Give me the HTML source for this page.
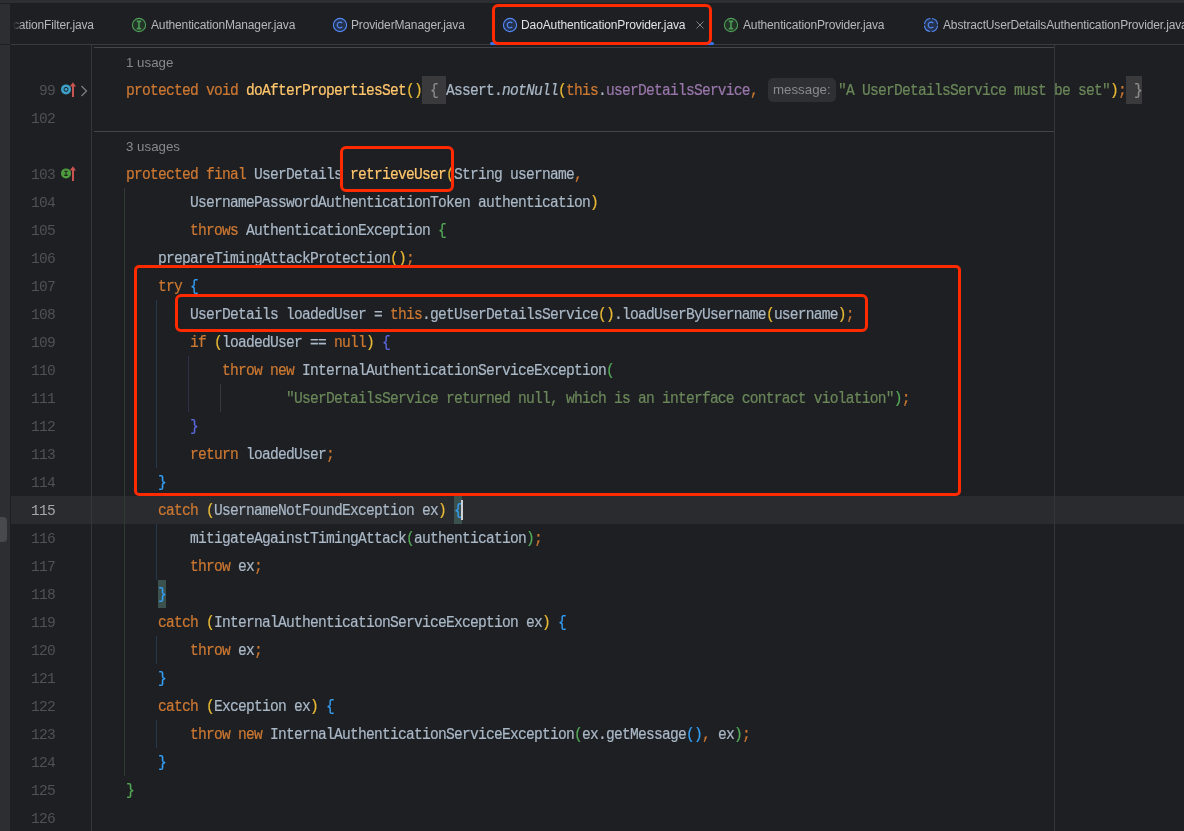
<!DOCTYPE html>
<html><head><meta charset="utf-8">
<style>
html,body{margin:0;padding:0;}
*{-webkit-font-smoothing:antialiased;}
body{width:1184px;height:831px;overflow:hidden;background:#1E1F22;position:relative;font-family:"Liberation Sans",sans-serif;}
.abs{position:absolute;}
.ln,.cl,.tab,.inl{will-change:transform;}
.ln{position:absolute;height:28px;line-height:30px;white-space:pre;font-family:"Liberation Mono",monospace;font-size:14.6px;letter-spacing:-0.76px;color:#4E5157;}
.ln.cur{color:#A4A6AC;}
.cl{position:absolute;height:28px;line-height:28px;white-space:pre;font-family:"Liberation Mono",monospace;font-size:14.6px;letter-spacing:-0.76px;color:#A9B7C6;-webkit-text-stroke:0.2px currentColor;transform:scaleY(1.1);transform-origin:0 5px;}
.tab{position:absolute;top:4px;height:40px;line-height:42px;white-space:pre;font-size:12px;letter-spacing:-0.15px;}
.inl{position:absolute;height:28px;line-height:30px;white-space:pre;font-size:13.3px;color:#86898F;}
</style></head><body>
<div class="abs" style="left:0px;top:0px;width:1184px;height:3px;background:#2D2E32"></div>
<div class="abs" style="left:0px;top:4px;width:10px;height:827px;background:#2D2E32"></div>
<div class="abs" style="left:0px;top:44px;width:10px;height:1px;background:#1E1F22"></div>
<div class="abs" style="left:-3px;top:517px;width:10px;height:25px;background:#48494C;border-radius:4px"></div>
<div class="abs" style="left:11px;top:44px;width:1173px;height:1px;background:#393B40"></div>
<div class="abs" style="left:11px;top:496px;width:1173px;height:28px;background:#2A2B2F"></div>
<div class="abs" style="left:91px;top:45px;width:1px;height:786px;background:#33363A"></div>
<div class="abs" style="left:1054px;top:45px;width:1px;height:786px;background:#33363A"></div>
<div class="abs" style="left:94px;top:47px;width:960px;height:1px;background:#43454A"></div>
<div class="abs" style="left:94px;top:131px;width:960px;height:1px;background:#43454A"></div>
<div class="tab" style="left:13px;color:#B4B7BD;-webkit-mask-image:linear-gradient(90deg,transparent 0,#000 10px)">cationFilter.java</div>
<svg class="abs" style="left:131px;top:17px" width="16" height="16" viewBox="-8 -8 16 16"><circle r="6.6" fill="#233325" stroke="#4F9F5B" stroke-width="1.1" /><path d="M-2.2 -3.6H2.2M-2.2 3.6H2.2M0 -3.6V3.6" stroke="#4C9857" stroke-width="1.6" fill="none"/></svg>
<div class="tab" style="left:151px;color:#B4B7BD;">AuthenticationManager.java</div>
<svg class="abs" style="left:332px;top:17px" width="16" height="16" viewBox="-8 -8 16 16"><circle r="6.6" fill="#25324D" stroke="#548AF7" stroke-width="1.1" /><path d="M2.3 -1.9A2.9 2.9 0 1 0 2.3 1.9" stroke="#548AF7" stroke-width="1.15" fill="none"/></svg>
<div class="tab" style="left:351px;color:#B4B7BD;">ProviderManager.java</div>
<svg class="abs" style="left:502px;top:17px" width="16" height="16" viewBox="-8 -8 16 16"><circle r="6.6" fill="#25324D" stroke="#548AF7" stroke-width="1.1" /><path d="M2.3 -1.9A2.9 2.9 0 1 0 2.3 1.9" stroke="#548AF7" stroke-width="1.15" fill="none"/></svg>
<div class="tab" style="left:521px;color:#DFE1E5;letter-spacing:-0.1px;">DaoAuthenticationProvider.java</div>
<svg class="abs" style="left:696px;top:21px" width="8" height="8" viewBox="0 0 8 8"><path d="M0.5 0.5L7.5 7.5M7.5 0.5L0.5 7.5" stroke="#7E8086" stroke-width="1"/></svg>
<svg class="abs" style="left:723px;top:17px" width="16" height="16" viewBox="-8 -8 16 16"><circle r="6.6" fill="#233325" stroke="#4F9F5B" stroke-width="1.1" /><path d="M-2.2 -3.6H2.2M-2.2 3.6H2.2M0 -3.6V3.6" stroke="#4C9857" stroke-width="1.6" fill="none"/></svg>
<div class="tab" style="left:743px;color:#B4B7BD;">AuthenticationProvider.java</div>
<svg class="abs" style="left:923px;top:17px" width="16" height="16" viewBox="-8 -8 16 16"><circle r="6.6" fill="#25324D" stroke="#548AF7" stroke-width="1.1" stroke-dasharray="8.77 1.6" stroke-dashoffset="9.57"/><path d="M2.3 -1.9A2.9 2.9 0 1 0 2.3 1.9" stroke="#548AF7" stroke-width="1.15" fill="none"/></svg>
<div class="tab" style="left:943px;color:#B4B7BD;">AbstractUserDetailsAuthenticationProvider.java</div>
<div class="abs" style="left:490px;top:42px;width:224px;height:3px;background:#3574F0;border-radius:1.5px"></div>
<div class="ln" style="top:76px;left:39px">99</div>
<div class="ln" style="top:104px;left:31px">102</div>
<div class="ln" style="top:160px;left:31px">103</div>
<div class="ln" style="top:188px;left:31px">104</div>
<div class="ln" style="top:216px;left:31px">105</div>
<div class="ln" style="top:244px;left:31px">106</div>
<div class="ln" style="top:272px;left:31px">107</div>
<div class="ln" style="top:300px;left:31px">108</div>
<div class="ln" style="top:328px;left:31px">109</div>
<div class="ln" style="top:356px;left:31px">110</div>
<div class="ln" style="top:384px;left:31px">111</div>
<div class="ln" style="top:412px;left:31px">112</div>
<div class="ln" style="top:440px;left:31px">113</div>
<div class="ln" style="top:468px;left:31px">114</div>
<div class="ln cur" style="top:496px;left:31px">115</div>
<div class="ln" style="top:524px;left:31px">116</div>
<div class="ln" style="top:552px;left:31px">117</div>
<div class="ln" style="top:580px;left:31px">118</div>
<div class="ln" style="top:608px;left:31px">119</div>
<div class="ln" style="top:636px;left:31px">120</div>
<div class="ln" style="top:664px;left:31px">121</div>
<div class="ln" style="top:692px;left:31px">122</div>
<div class="ln" style="top:720px;left:31px">123</div>
<div class="ln" style="top:748px;left:31px">124</div>
<div class="ln" style="top:776px;left:31px">125</div>
<div class="ln" style="top:804px;left:31px">126</div>
<svg class="abs" style="left:60px;top:80px" width="18" height="18" viewBox="0 0 18 18"><circle cx="6" cy="9.4" r="5" fill="#3DA0C8"/><circle cx="6" cy="9.4" r="2" fill="none" stroke="#1E1F22" stroke-width="1"/><path d="M13 17V6" stroke="#C75450" stroke-width="2"/><path d="M9.8 6.4L12.9 2.2L16 6.4Z" fill="#C75450"/></svg>
<svg class="abs" style="left:60px;top:164px" width="18" height="18" viewBox="0 0 18 18"><circle cx="6" cy="9.4" r="5" fill="#4E9A3E"/><path d="M4.2 7.2H7.8M4.2 11.4H7.8M6 7.2V11.4" stroke="#1E2A1C" stroke-width="1.1"/><path d="M13 17V6" stroke="#C75450" stroke-width="2"/><path d="M9.8 6.4L12.9 2.2L16 6.4Z" fill="#C75450"/></svg>
<svg class="abs" style="left:80px;top:85px" width="8" height="12" viewBox="0 0 8 12"><path d="M1.5 1L6.5 6L1.5 11" stroke="#7E8086" stroke-width="1.2" fill="none"/></svg>
<div class="abs" style="left:124px;top:188px;width:1px;height:588px;background:#2E3B2F"></div>
<div class="abs" style="left:156px;top:300px;width:1px;height:168px;background:#25384A"></div>
<div class="abs" style="left:156px;top:524px;width:1px;height:56px;background:#25384A"></div>
<div class="abs" style="left:156px;top:636px;width:1px;height:28px;background:#25384A"></div>
<div class="abs" style="left:156px;top:720px;width:1px;height:28px;background:#25384A"></div>
<div class="abs" style="left:188px;top:356px;width:1px;height:56px;background:#2D3046"></div>
<div class="abs" style="left:220px;top:384px;width:1px;height:28px;background:#36383C"></div>
<div class="inl" style="left:126px;top:48px">1 usage</div>
<div class="inl" style="left:126px;top:132px">3 usages</div>
<div class="abs" style="left:454px;top:496px;width:8px;height:28px;background:#3B514D"></div>
<div class="abs" style="left:158px;top:580px;width:8px;height:28px;background:#3B514D"></div>
<div class="cl" style="top:160px;left:126px"><span style="color:#CC7832;">protected final </span>UserDetails <span style="color:#FFC66D;">retrieveUser</span><span style="color:#E8BA36;">(</span>String username<span style="color:#CC7832;">,</span></div>
<div class="cl" style="top:188px;left:190px">UsernamePasswordAuthenticationToken authentication<span style="color:#E8BA36;">)</span></div>
<div class="cl" style="top:216px;left:190px"><span style="color:#CC7832;">throws </span>AuthenticationException <span style="color:#54A857;">{</span></div>
<div class="cl" style="top:244px;left:158px">prepareTimingAttackProtection<span style="color:#E8BA36;">()</span><span style="color:#CC7832;">;</span></div>
<div class="cl" style="top:272px;left:158px"><span style="color:#CC7832;">try </span><span style="color:#359FF4;">{</span></div>
<div class="cl" style="top:300px;left:190px">UserDetails loadedUser = <span style="color:#CC7832;">this</span>.getUserDetailsService<span style="color:#E8BA36;">()</span>.loadUserByUsername<span style="color:#E8BA36;">(</span>username<span style="color:#E8BA36;">)</span><span style="color:#CC7832;">;</span></div>
<div class="cl" style="top:328px;left:190px"><span style="color:#CC7832;">if </span><span style="color:#E8BA36;">(</span>loadedUser == <span style="color:#CC7832;">null</span><span style="color:#E8BA36;">)</span> <span style="color:#5968DB;">{</span></div>
<div class="cl" style="top:356px;left:222px"><span style="color:#CC7832;">throw new </span>InternalAuthenticationServiceException<span style="color:#54A857;">(</span></div>
<div class="cl" style="top:384px;left:286px"><span style="color:#6A8759;">&quot;UserDetailsService returned null, which is an interface contract violation&quot;</span><span style="color:#54A857;">)</span><span style="color:#CC7832;">;</span></div>
<div class="cl" style="top:412px;left:190px"><span style="color:#5968DB;">}</span></div>
<div class="cl" style="top:440px;left:190px"><span style="color:#CC7832;">return </span>loadedUser<span style="color:#CC7832;">;</span></div>
<div class="cl" style="top:468px;left:158px"><span style="color:#359FF4;">}</span></div>
<div class="cl" style="top:496px;left:158px"><span style="color:#CC7832;">catch </span><span style="color:#E8BA36;">(</span>UsernameNotFoundException ex<span style="color:#E8BA36;">)</span> <span style="color:#359FF4;">{</span></div>
<div class="cl" style="top:524px;left:190px">mitigateAgainstTimingAttack<span style="color:#54A857;">(</span>authentication<span style="color:#54A857;">)</span><span style="color:#CC7832;">;</span></div>
<div class="cl" style="top:552px;left:190px"><span style="color:#CC7832;">throw </span>ex<span style="color:#CC7832;">;</span></div>
<div class="cl" style="top:580px;left:158px"><span style="color:#359FF4;">}</span></div>
<div class="cl" style="top:608px;left:158px"><span style="color:#CC7832;">catch </span><span style="color:#E8BA36;">(</span>InternalAuthenticationServiceException ex<span style="color:#E8BA36;">)</span> <span style="color:#359FF4;">{</span></div>
<div class="cl" style="top:636px;left:190px"><span style="color:#CC7832;">throw </span>ex<span style="color:#CC7832;">;</span></div>
<div class="cl" style="top:664px;left:158px"><span style="color:#359FF4;">}</span></div>
<div class="cl" style="top:692px;left:158px"><span style="color:#CC7832;">catch </span><span style="color:#E8BA36;">(</span>Exception ex<span style="color:#E8BA36;">)</span> <span style="color:#359FF4;">{</span></div>
<div class="cl" style="top:720px;left:190px"><span style="color:#CC7832;">throw new </span>InternalAuthenticationServiceException<span style="color:#54A857;">(</span>ex.getMessage<span style="color:#359FF4;">()</span><span style="color:#CC7832;">,</span> ex<span style="color:#54A857;">)</span><span style="color:#CC7832;">;</span></div>
<div class="cl" style="top:748px;left:158px"><span style="color:#359FF4;">}</span></div>
<div class="cl" style="top:776px;left:126px"><span style="color:#54A857;">}</span></div>
<div class="abs" style="left:422px;top:76px;width:24px;height:28px;background:#3A3A3C"></div>
<div class="abs" style="left:1126px;top:76px;width:16px;height:28px;background:#3A3A3C"></div>
<div class="cl" style="top:76px;left:126px"><span style="color:#CC7832;">protected void </span><span style="color:#FFC66D;">doAfterPropertiesSet</span><span style="color:#E8BA36;">()</span><span style="color:#8C8C8C;"> {</span> Assert.<span style="color:#A9B7C6;font-style:italic">notNull</span><span style="color:#E8BA36;">(</span><span style="color:#CC7832;">this</span>.<span style="color:#9876AA;">userDetailsService</span><span style="color:#CC7832;">,</span></div>
<div class="abs" style="left:768px;top:78px;width:68px;height:24px;background:#2F3033;border-radius:5px"></div>
<div class="inl" style="left:773px;top:75px;font-size:13.3px;color:#878A90">message:</div>
<div class="cl" style="top:76px;left:838px"><span style="color:#6A8759;">&quot;A UserDetailsService must be set&quot;</span><span style="color:#E8BA36;">)</span><span style="color:#CC7832;">;</span> <span style="color:#8C8C8C;">}</span></div>
<div class="abs" style="left:461px;top:500px;width:2px;height:20px;background:#CED0D6"></div>
<div class="abs" style="left:492px;top:4px;width:220px;height:41px;border:3px solid #FF2A00;border-radius:6px;box-sizing:border-box"></div>
<div class="abs" style="left:340px;top:146px;width:114px;height:46px;border:3px solid #FF2A00;border-radius:6px;box-sizing:border-box"></div>
<div class="abs" style="left:134px;top:265px;width:827px;height:231px;border:3px solid #FF2A00;border-radius:5px;box-sizing:border-box"></div>
<div class="abs" style="left:175px;top:294px;width:693px;height:38px;border:3px solid #FF2A00;border-radius:6px;box-sizing:border-box"></div>
</body></html>
